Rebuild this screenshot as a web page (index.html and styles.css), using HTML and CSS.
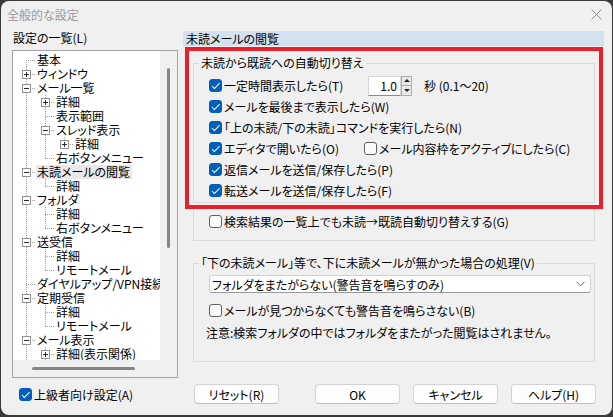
FILE: index.html
```html
<!DOCTYPE html>
<html lang="ja">
<head>
    <meta charset="UTF-8">
    <title>全般的な設定</title>
    <link rel="stylesheet" href="styles.css">
</head>
<body>
    <div class="window">
        <div class="titlebar">
            <span class="title">全般的な設定</span>
            <svg class="close" width="11" height="11" viewBox="0 0 11 11"><path d="M0.5 0.5L10.5 10.5M10.5 0.5L0.5 10.5" stroke="#8c8c8c" stroke-width="1" fill="none"/></svg>
        </div>

        <div class="main">
            <!-- 左: 設定ツリー -->
            <div class="sidebar">
                <div class="side-label">設定の一覧(L)</div>
                <div class="tree">
                    <div class="tree-content">
                        <div class="row"><span class="c n first"></span><span class="t">基本</span></div>
                        <div class="row"><span class="c n mid"><i class="exp plus"></i></span><span class="t">ウィンドウ</span></div>
                        <div class="row"><span class="c n mid"><i class="exp minus"></i></span><span class="t">メール一覧</span></div>
                        <div class="row"><span class="c v"></span><span class="c n mid"><i class="exp plus"></i></span><span class="t">詳細</span></div>
                        <div class="row"><span class="c v"></span><span class="c n mid"></span><span class="t">表示範囲</span></div>
                        <div class="row"><span class="c v"></span><span class="c n mid"><i class="exp minus"></i></span><span class="t">スレッド表示</span></div>
                        <div class="row"><span class="c v"></span><span class="c v"></span><span class="c n end"><i class="exp plus"></i></span><span class="t">詳細</span></div>
                        <div class="row"><span class="c v"></span><span class="c n end"></span><span class="t">右ボタンメニュー</span></div>
                        <div class="row"><span class="c n mid"><i class="exp minus"></i></span><span class="t selected">未読メールの閲覧</span></div>
                        <div class="row"><span class="c v"></span><span class="c n end"></span><span class="t">詳細</span></div>
                        <div class="row"><span class="c n mid"><i class="exp minus"></i></span><span class="t">フォルダ</span></div>
                        <div class="row"><span class="c v"></span><span class="c n mid"></span><span class="t">詳細</span></div>
                        <div class="row"><span class="c v"></span><span class="c n end"></span><span class="t">右ボタンメニュー</span></div>
                        <div class="row"><span class="c n mid"><i class="exp minus"></i></span><span class="t">送受信</span></div>
                        <div class="row"><span class="c v"></span><span class="c n mid"></span><span class="t">詳細</span></div>
                        <div class="row"><span class="c v"></span><span class="c n end"></span><span class="t">リモートメール</span></div>
                        <div class="row"><span class="c n mid"></span><span class="t">ダイヤルアップ/VPN接続</span></div>
                        <div class="row"><span class="c n mid"><i class="exp minus"></i></span><span class="t">定期受信</span></div>
                        <div class="row"><span class="c v"></span><span class="c n mid"></span><span class="t">詳細</span></div>
                        <div class="row"><span class="c v"></span><span class="c n end"></span><span class="t">リモートメール</span></div>
                        <div class="row"><span class="c n mid"><i class="exp minus"></i></span><span class="t">メール表示</span></div>
                        <div class="row"><span class="c v"></span><span class="c n mid"><i class="exp plus"></i></span><span class="t">詳細(表示関係)</span></div>
                    </div>
                    <div class="vscroll"><div class="thumb"></div></div>
                    <div class="hscroll"><div class="thumb"></div></div>
                    <div class="corner"></div>
                </div>
                <div class="check advanced"><span class="cb on"></span><span>上級者向け設定(A)</span></div>
            </div>

            <!-- 右: 設定ページ -->
            <div class="page">
                <div class="page-header">未読メールの閲覧</div>

                <fieldset class="group first-group">
                    <legend>未読から既読への自動切り替え</legend>
                    <div class="opt">
                        <div class="check w1"><span class="cb on"></span><span>一定時間表示したら(T)</span></div>
                        <span class="spin">
                            <span class="spin-val">1.0</span>
                            <span class="spin-btns"><i class="up"></i><i class="down"></i></span>
                        </span>
                        <span class="unit">秒 (0.1～20)</span>
                    </div>
                    <div class="opt"><div class="check"><span class="cb on"></span><span>メールを最後まで表示したら(W)</span></div></div>
                    <div class="opt"><div class="check"><span class="cb on"></span><span>「上の未読/下の未読」コマンドを実行したら(N)</span></div></div>
                    <div class="opt">
                        <div class="check w2"><span class="cb on"></span><span>エディタで開いたら(O)</span></div>
                        <div class="check"><span class="cb"></span><span>メール内容枠をアクティブにしたら(C)</span></div>
                    </div>
                    <div class="opt"><div class="check"><span class="cb on"></span><span>返信メールを送信/保存したら(P)</span></div></div>
                    <div class="opt"><div class="check"><span class="cb on"></span><span>転送メールを送信/保存したら(F)</span></div></div>
                </fieldset>

                <div class="group search-group">
                    <div class="opt"><div class="check"><span class="cb"></span><span>検索結果の一覧上でも未読→既読自動切り替えする(G)</span></div></div>
                </div>

                <fieldset class="group second-group">
                    <legend>「下の未読メール」等で、下に未読メールが無かった場合の処理(V)</legend>
                    <div class="select">
                        <span>フォルダをまたがらない(警告音を鳴らすのみ)</span>
                        <svg width="9" height="6" viewBox="0 0 9 6"><path d="M0.5 0.8L4.5 4.8L8.5 0.8" stroke="#6a6a6a" stroke-width="1" fill="none"/></svg>
                    </div>
                    <div class="opt beep"><div class="check"><span class="cb"></span><span>メールが見つからなくても警告音を鳴らさない(B)</span></div></div>
                    <div class="note">注意:検索フォルダの中ではフォルダをまたがった閲覧はされません。</div>
                </fieldset>

                <div class="buttons">
                    <button class="btn">リセット(R)</button>
                    <button class="btn ok">OK</button>
                    <button class="btn">キャンセル</button>
                    <button class="btn">ヘルプ(H)</button>
                </div>

                <div class="highlight"></div>
            </div>
        </div>
    </div>
</body>
</html>
```

FILE: styles.css
```css
* {
    box-sizing: border-box;
}
body {
    margin: 0;
    background: #3a3a3a;
    font-family: "Noto Sans CJK JP", "Liberation Sans", sans-serif;
    font-size: 12px;
    color: #000;
    font-feature-settings: "palt";
}
.window {
    margin: 1px 0 0 1px;
    width: 611px;
    height: 414px;
    background: #f0f0f0;
    border-radius: 8px;
    overflow: hidden;
}
.titlebar {
    height: 28px;
    display: flex;
    align-items: center;
    justify-content: space-between;
    padding: 0 10px 2px 6px;
    color: #9a9a9a;
}
.main {
    display: flex;
    gap: 5px;
    padding: 1px 0 0 11px;
}

/* ---- sidebar / tree ---- */
.sidebar {
    width: 166px;
}
.side-label {
    line-height: 16px;
    padding-left: 1px;
}
.tree {
    margin-top: 4px;
    height: 328px;
    border: 1px solid #a3a3a3;
    display: grid;
    grid-template-columns: 147px 17px;
    grid-template-rows: 309px 17px;
    background: #f0f0f0;
}
.tree-content {
    background: #fff;
    overflow: hidden;
    padding: 2px 0 0 4px;
    white-space: nowrap;
}
.row {
    display: flex;
    height: 14px;
    line-height: 14px;
}
.c {
    width: 19px;
    height: 14px;
    flex: none;
    display: flex;
    align-items: flex-start;
    background-repeat: no-repeat;
}
.c.v {
    background-image: repeating-linear-gradient(to bottom, #a0a0a0 0 1px, transparent 1px 2px);
    background-position: 9px 0;
    background-size: 1px 14px;
}
.c.mid {
    background-image:
        repeating-linear-gradient(to bottom, #a0a0a0 0 1px, transparent 1px 2px),
        repeating-linear-gradient(to right, #a0a0a0 0 1px, transparent 1px 2px);
    background-position: 9px 0, 9px 7px;
    background-size: 1px 14px, 10px 1px;
}
.c.end {
    background-image:
        repeating-linear-gradient(to bottom, #a0a0a0 0 1px, transparent 1px 2px),
        repeating-linear-gradient(to right, #a0a0a0 0 1px, transparent 1px 2px);
    background-position: 9px 0, 9px 7px;
    background-size: 1px 7px, 10px 1px;
}
.c.first {
    background-image:
        repeating-linear-gradient(to bottom, #a0a0a0 0 1px, transparent 1px 2px),
        repeating-linear-gradient(to right, #a0a0a0 0 1px, transparent 1px 2px);
    background-position: 9px 7px, 9px 7px;
    background-size: 1px 7px, 10px 1px;
}
.exp {
    width: 9px;
    height: 9px;
    margin: 3px 0 0 5px;
    border: 1px solid #919191;
    background-color: #fff;
    background-repeat: no-repeat;
    background-position: center;
}
.exp.plus {
    background-image: linear-gradient(#2b2b2b, #2b2b2b), linear-gradient(#2b2b2b, #2b2b2b);
    background-size: 5px 1px, 1px 5px;
}
.exp.minus {
    background-image: linear-gradient(#2b2b2b, #2b2b2b);
    background-size: 5px 1px;
}
.t {
    padding: 0 2px 0 1px;
}
.t.selected {
    background: #e8e8e8;
}
.vscroll {
    display: flex;
    justify-content: center;
    padding: 17px 0 0 0;
}
.vscroll .thumb {
    width: 3px;
    height: 180px;
    border-radius: 2px;
    background: #858585;
}
.hscroll {
    display: flex;
    align-items: center;
    padding-left: 19px;
}
.hscroll .thumb {
    width: 103px;
    height: 3px;
    border-radius: 2px;
    background: #858585;
}

/* ---- checkboxes ---- */
.check {
    display: flex;
    align-items: center;
    gap: 2px;
    white-space: nowrap;
}
.cb {
    width: 13px;
    height: 13px;
    flex: none;
    border-radius: 3px;
    border: 1px solid #5f5f5f;
    background: #fbfbfb;
    position: relative;
}
.cb.on {
    background: #005fb8;
    border-color: #005fb8;
}
.cb.on::after {
    content: "";
    position: absolute;
    left: 3.5px;
    top: 1px;
    width: 3px;
    height: 6.5px;
    border: solid #fff;
    border-width: 0 1.3px 1.3px 0;
    transform: rotate(45deg);
}
.advanced {
    margin: 8px 0 0 7px;
}

/* ---- page ---- */
.page {
    width: 421px;
    position: relative;
}
.page-header {
    margin-top: 1px;
    height: 15px;
    line-height: 15px;
    padding-left: 3px;
    background: #d4e1ef;
}
.group {
    margin: 0 9px 0 10px;
    padding: 5px 0 8px 15px;
    border: 1px solid #dadada;
    min-width: 0;
}
.group legend {
    padding: 0 2px;
    margin-left: -10px;
    line-height: 14px;
}
.first-group {
    margin-top: 10px;
    padding-bottom: 1px;
}
.search-group {
    margin-top: 5px;
    padding-top: 2px;
}
.opt {
    display: flex;
    align-items: center;
    height: 21px;
}
.w1 {
    width: 159px;
}
.w2 {
    width: 155px;
}
.spin {
    display: flex;
    height: 20px;
}
.spin-val {
    width: 33px;
    background: #fff;
    border: 1px solid #d6d6d6;
    border-bottom-color: #8a8a8a;
    text-align: right;
    padding-right: 3px;
    line-height: 18px;
}
.spin-btns {
    width: 11px;
    display: flex;
    flex-direction: column;
    border: 1px solid #adadad;
    background: #e9e9e9;
}
.spin-btns i {
    flex: 1;
    display: flex;
    align-items: center;
    justify-content: center;
}
.spin-btns i.up {
    border-bottom: 1px solid #adadad;
}
.spin-btns i::before {
    content: "";
    border-left: 3px solid transparent;
    border-right: 3px solid transparent;
}
.spin-btns i.up::before {
    border-bottom: 3px solid #222;
}
.spin-btns i.down::before {
    border-top: 3px solid #222;
}
.unit {
    margin-left: 12px;
}
.second-group {
    margin-top: 15px;
    padding-bottom: 18px;
}
.select {
    margin-right: 3px;
    height: 18px;
    background: #fff;
    border: 1px solid #d0d0d0;
    border-bottom-color: #9a9a9a;
    border-radius: 3px;
    display: flex;
    align-items: center;
    justify-content: space-between;
    padding: 0 5px 0 2px;
}
.opt.beep {
    margin-top: 7px;
    height: 20px;
}
.note {
    margin: 3px 0 0 -3px;
    line-height: 20px;
}
.buttons {
    display: flex;
    gap: 13px;
    margin: 22px 8px 0 11px;
}
.btn {
    width: 85px;
    height: 20px;
    padding: 0;
    font: inherit;
    color: #000;
    background: #fdfdfd;
    border: 1px solid #d3d3d3;
    border-bottom-color: #c0c0c0;
    border-radius: 4px;
}
.btn.ok {
    margin-left: auto;
}

/* 赤い注目枠 (注釈) */
.highlight {
    position: absolute;
    left: 2px;
    top: 17px;
    width: 418px;
    height: 162px;
    border: 4px solid #e8202a;
    pointer-events: none;
}
```
